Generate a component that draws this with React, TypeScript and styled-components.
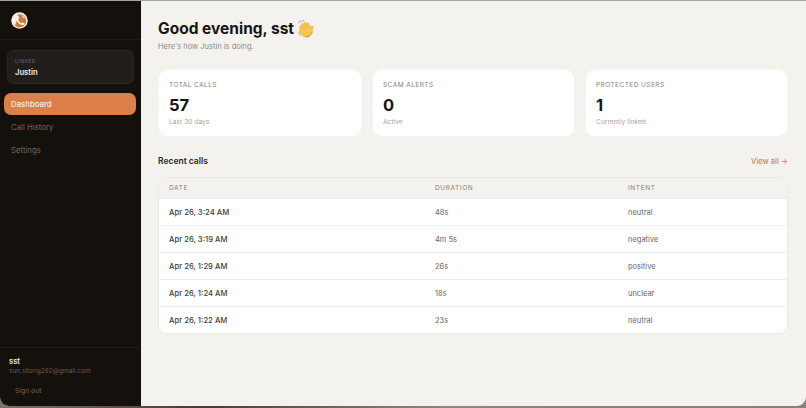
import styled, { createGlobalStyle } from "styled-components";

const GlobalStyle = createGlobalStyle`
  html, body {
    margin: 0;
    padding: 0;
    height: 100%;
    background: #6f635c;
    font-family: "Inter", "Liberation Sans", sans-serif;
    overflow: hidden;
  }
`;

const Backdrop = styled.div`
  width: 806px;
  height: 408px;
  padding-top: 1px;
  box-sizing: border-box;
  background: linear-gradient(180deg, #a5a19c 0, #a5a19c 1px, transparent 1px),
    linear-gradient(90deg, #7b7069, #4b3a33 25%, #8f847c 55%, #8a7f78);
`;

const Win = styled.div`
  display: flex;
  height: 405px;
  border-radius: 0 0 9px 9px;
  overflow: hidden;
  background: #f4f2ee;
`;

const Sidebar = styled.aside`
  width: 141px;
  flex: none;
  display: flex;
  flex-direction: column;
  background: #14100c;
`;

const LogoBar = styled.div`
  height: 38px;
  display: flex;
  align-items: center;
  padding-left: 11px;
  border-bottom: 1px solid #1d1915;
`;

const LinkedCard = styled.div`
  margin: 10px 7px 9px;
  height: 34px;
  box-sizing: border-box;
  padding: 7px 7px;
  background: #201d1a;
  border: 1px solid #2a2723;
  border-radius: 6px;
`;

const LinkedLabel = styled.div`
  font-size: 5px;
  line-height: 7px;
  letter-spacing: 0.5px;
  color: #6f6a64;
`;

const LinkedName = styled.div`
  margin-top: 2px;
  font-size: 7.6px;
  line-height: 12px;
  font-weight: 600;
  color: #f2efe9;
`;

const Nav = styled.nav`
  display: flex;
  flex-direction: column;
  gap: 1px;
  padding: 0 5px 0 4px;
`;

const NavItem = styled.a<{ $active?: boolean }>`
  height: 22px;
  display: flex;
  align-items: center;
  padding-left: 7px;
  border-radius: 7px;
  font-size: 7.8px;
  font-weight: ${(p) => (p.$active ? 500 : 400)};
  color: ${(p) => (p.$active ? "#f8efe7" : "#6d6862")};
  background: ${(p) => (p.$active ? "#dd7f4b" : "transparent")};
`;

const SideFooter = styled.div`
  margin-top: auto;
  height: 59px;
  box-sizing: border-box;
  padding-top: 9px;
  border-top: 1px solid #1f1b17;
`;

const UserName = styled.div`
  padding-left: 9px;
  font-size: 7.6px;
  line-height: 10px;
  font-weight: 600;
  color: #ece8e2;
`;

const UserEmail = styled.div`
  padding-left: 9px;
  font-size: 6.5px;
  line-height: 9px;
  color: #625d57;
`;

const SignOut = styled.div`
  margin-top: 10px;
  padding-left: 15px;
  font-size: 6.8px;
  line-height: 10px;
  color: #68635d;
`;

const Main = styled.main`
  flex: 1;
  min-width: 0;
  padding: 18px 18px 0 17px;
`;

const TitleRow = styled.h1`
  margin: 0;
  display: flex;
  align-items: center;
  gap: 3px;
  font-size: 15.5px;
  line-height: 20px;
  font-weight: 700;
  color: #181512;
`;

const Subtitle = styled.p`
  margin: 2px 0 0;
  font-size: 7.5px;
  line-height: 11px;
  color: #8e8a85;
`;

const Cards = styled.section`
  display: grid;
  grid-template-columns: 204px 203px 203px;
  gap: 10px;
  margin-top: 17px;
`;

const Card = styled.div`
  height: 68px;
  box-sizing: border-box;
  padding: 11px 10px 0;
  background: #fff;
  border-radius: 10px;
  border: 1px solid #f6f4f1;
`;

const CardLabel = styled.div`
  font-size: 6.5px;
  line-height: 9px;
  letter-spacing: 0.45px;
  color: #85817c;
`;

const CardValue = styled.div`
  margin-top: 5px;
  font-size: 16.5px;
  line-height: 20px;
  font-weight: 700;
  color: #181512;
`;

const CardNote = styled.div`
  margin-top: 3px;
  font-size: 6.7px;
  line-height: 9px;
  color: #a8a49f;
`;

const SectionHead = styled.div`
  display: flex;
  justify-content: space-between;
  align-items: center;
  margin-top: 18px;
  height: 12px;
`;

const SectionTitle = styled.h2`
  margin: 0;
  font-size: 8.5px;
  font-weight: 600;
  color: #2a2622;
`;

const ViewAll = styled.a`
  font-size: 7.5px;
  font-weight: 500;
  color: #d98155;
`;

const Table = styled.div`
  margin-top: 10px;
  border: 1px solid #ece9e4;
  border-radius: 9px;
  overflow: hidden;
  background: #fff;
`;

const Row = styled.div<{ $head?: boolean }>`
  display: grid;
  grid-template-columns: 266px 193px 1fr;
  align-items: center;
  height: ${(p) => (p.$head ? "21px" : "27px")};
  padding-left: 10px;
  box-sizing: border-box;
  background: ${(p) => (p.$head ? "#f4f2ee" : "#fff")};
  border-bottom: 1px solid #efedea;
  &:last-child {
    border-bottom: none;
    height: 26px;
  }
`;

const HeadCell = styled.span`
  font-size: 6.5px;
  letter-spacing: 0.6px;
  color: #85817c;
`;

const DateCell = styled.span`
  font-size: 7.7px;
  font-weight: 500;
  color: #403c38;
`;

const Cell = styled.span`
  font-size: 7.5px;
  color: #6b6762;
`;

const LogoMark = () => (
  <svg width="17" height="17" viewBox="0 0 17 17">
    <circle cx="8.5" cy="8.5" r="8.3" fill="#f8eee2" />
    <path d="M7 2.300c4.500-.6 8.200 2.500 8.200 6.500 0 3.900-3.100 6.800-7 6.600-1.900-.1-3.500-.9-4.600-2.100C6 12 5.500 5 7 2.300z" fill="#d5763f" />
    <path
      d="M5 4.200c-.9 4.200 2.800 8.800 7.400 8.900.9 0 1.300-.8 1.100-1.600l-2-1.200-1.200 1C8.800 10.400 7.600 9 7.200 7.400l1.100-1L7.400 4C6.500 3.400 5.500 3.500 5 4.200z"
      fill="#fbf1e4"
    />
    <path d="M10.500 3.200c1.700.6 2.900 1.800 3.500 3.500-1.500-.3-3-1.700-3.500-3.500z" fill="#f3d9bd" />
  </svg>
);

const WaveHand = () => (
  <svg width="20" height="20" viewBox="0 0 18 18">
    <path
      d="M4.200 9.200 2.700 7.300c-.5-.8.5-1.500 1.100-.8L6 8.800 4.300 5.300c-.4-.8.7-1.400 1.200-.6l2 3.400-1.100-4.100c-.2-.9 1-1.200 1.300-.4l1.700 4-.3-3.100c-.1-.9 1-1.100 1.300-.2l1.300 4.200 1.300-1.700c.5-.7 1.500-.1 1.200.7l-1.100 4.400c-.6 3.100-3.700 5-6.400 3.900-2-.8-3-2.700-4.500-6.600z"
      fill="#f5c84f"
      stroke="#f1bf45"
      strokeWidth="1.100"
      strokeLinejoin="round"
    />
    <path d="M8 15.800c2.800.6 5.300-1.400 5.800-4.200" stroke="#d99a2e" strokeWidth=".8" fill="none" strokeLinecap="round" />
    <path d="M1.600 11.500c.3 1.200.9 2.200 1.700 3" stroke="#a9b4bd" strokeWidth="1" fill="none" strokeLinecap="round" />
    <path d="M3.300 1.500 1.500 3.300M5.800 1.200 4.700 2.300" stroke="#a9b4bd" strokeWidth="1" fill="none" strokeLinecap="round" />
  </svg>
);

const stats = [
  { label: "TOTAL CALLS", value: "57", note: "Last 30 days" },
  { label: "SCAM ALERTS", value: "0", note: "Active" },
  { label: "PROTECTED USERS", value: "1", note: "Currently linked" },
];

const calls = [
  { date: "Apr 26, 3:24 AM", duration: "48s", intent: "neutral" },
  { date: "Apr 26, 3:19 AM", duration: "4m 5s", intent: "negative" },
  { date: "Apr 26, 1:29 AM", duration: "26s", intent: "positive" },
  { date: "Apr 26, 1:24 AM", duration: "18s", intent: "unclear" },
  { date: "Apr 26, 1:22 AM", duration: "23s", intent: "neutral" },
];

export default function App() {
  return (
    <Backdrop>
      <GlobalStyle />
      <Win>
        <Sidebar>
          <LogoBar>
            <LogoMark />
          </LogoBar>
          <LinkedCard>
            <LinkedLabel>LINKED</LinkedLabel>
            <LinkedName>Justin</LinkedName>
          </LinkedCard>
          <Nav>
            <NavItem $active>Dashboard</NavItem>
            <NavItem>Call History</NavItem>
            <NavItem>Settings</NavItem>
          </Nav>
          <SideFooter>
            <UserName>sst</UserName>
            <UserEmail>sun.sitong262@gmail.com</UserEmail>
            <SignOut>Sign out</SignOut>
          </SideFooter>
        </Sidebar>
        <Main>
          <TitleRow>
            Good evening, sst <WaveHand />
          </TitleRow>
          <Subtitle>Here's how Justin is doing.</Subtitle>
          <Cards>
            {stats.map((s) => (
              <Card key={s.label}>
                <CardLabel>{s.label}</CardLabel>
                <CardValue>{s.value}</CardValue>
                <CardNote>{s.note}</CardNote>
              </Card>
            ))}
          </Cards>
          <SectionHead>
            <SectionTitle>Recent calls</SectionTitle>
            <ViewAll>View all →</ViewAll>
          </SectionHead>
          <Table>
            <Row $head>
              <HeadCell>DATE</HeadCell>
              <HeadCell>DURATION</HeadCell>
              <HeadCell>INTENT</HeadCell>
            </Row>
            {calls.map((c) => (
              <Row key={c.date}>
                <DateCell>{c.date}</DateCell>
                <Cell>{c.duration}</Cell>
                <Cell>{c.intent}</Cell>
              </Row>
            ))}
          </Table>
        </Main>
      </Win>
    </Backdrop>
  );
}
